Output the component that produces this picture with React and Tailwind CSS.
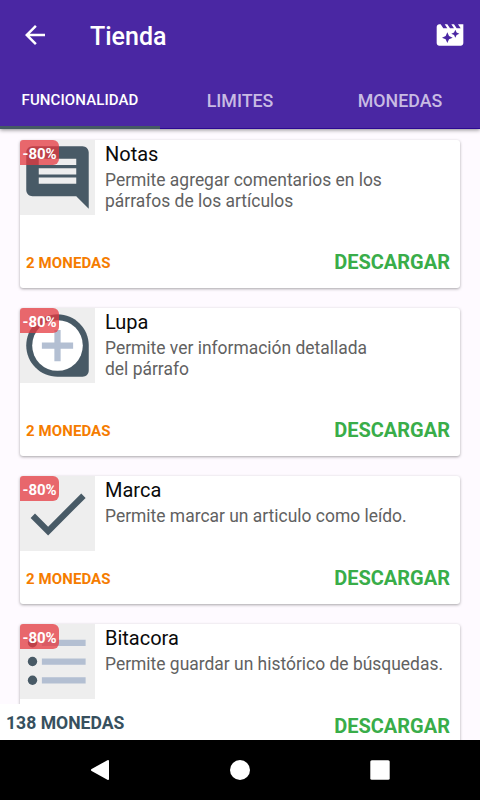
import { MdArrowBack, MdMovieFilter } from "react-icons/md";

const TABS = ["LIMITES", "MONEDAS"];

const NotasIcon = () => (
  <svg viewBox="0 0 24 24" className="h-[75px] w-[75px]">
    <path
      fill="#485a66"
      d="M21.99 4c0-1.1-.89-2-1.99-2H4c-1.1 0-2 .9-2 2v12c0 1.1.9 2 2 2h14l4 4-.01-18zM18 14H6v-2h12v2zm0-3H6V9h12v2zm0-3H6V6h12v2z"
    />
  </svg>
);

const LupaIcon = () => (
  <svg viewBox="0 0 24 24" className="h-[75px] w-[75px]">
    <path
      fill="#485a66"
      d="M12 2C6.49 2 2 6.49 2 12s4.49 10 10 10h8c1.1 0 2-.9 2-2v-8c0-5.51-4.49-10-10-10z"
    />
    <circle cx="12" cy="12" r="8.1" fill="#fff" />
    <path fill="#b3bfd2" d="M13 7h-2v4H7v2h4v4h2v-4h4v-2h-4z" />
  </svg>
);

const MarcaIcon = () => (
  <svg viewBox="0 0 24 24" className="h-[75px] w-[75px]">
    <path
      fill="#485a66"
      d="M9 16.2L4.8 12l-1.4 1.4L9 19 21 7l-1.4-1.4L9 16.2z"
    />
  </svg>
);

const BitacoraIcon = () => (
  <svg viewBox="0 0 24 24" className="h-[75px] w-[75px]">
    <g fill="#485a66">
      <circle cx="4" cy="6" r="1.5" />
      <circle cx="4" cy="12" r="1.5" />
      <circle cx="4" cy="18" r="1.5" />
    </g>
    <path fill="#b3bfd2" d="M7 5h14v2H7zM7 11h14v2H7zM7 17h14v2H7z" />
  </svg>
);

const ITEMS = [
  {
    title: "Notas",
    lines: ["Permite agregar comentarios en los", "párrafos de los artículos"],
    Icon: NotasIcon,
    price: "2 MONEDAS",
    height: "h-[148px]",
  },
  {
    title: "Lupa",
    lines: ["Permite ver información detallada", "del párrafo"],
    Icon: LupaIcon,
    price: "2 MONEDAS",
    height: "h-[148px]",
  },
  {
    title: "Marca",
    lines: ["Permite marcar un articulo como leído."],
    Icon: MarcaIcon,
    price: "2 MONEDAS",
    height: "h-[128px]",
  },
  {
    title: "Bitacora",
    lines: ["Permite guardar un histórico de búsquedas."],
    Icon: BitacoraIcon,
    height: "h-[128px]",
  },
];

const ProductCard = ({ title, lines, Icon, price, height }) => {
  return (
    <div
      className={`flex shrink-0 flex-col justify-between overflow-hidden rounded-[3px] bg-white shadow-[0_1px_3px_rgba(0,0,0,0.35)] ${height}`}
    >
      <div className="flex">
        <div className="relative h-[75px] w-[75px] shrink-0 bg-[#eeeeee]">
          <Icon />
          <span className="absolute left-0 top-0 flex h-[25px] w-[39px] items-center justify-center rounded-br-[6px] rounded-tr-[6px] bg-[#e53940]/75 pt-[3px] text-[15px] font-bold tracking-[-0.1px] text-white">
            -80%
          </span>
        </div>
        <div className="pl-[10px] pt-[2px]">
          <h2 className="text-[20px] leading-6 text-[#0a0a0a]">{title}</h2>
          <p className="mt-[4px] text-[17.45px] leading-[20.5px] text-[#616161]">
            {lines.map((line) => (
              <span key={line} className="block whitespace-nowrap">
                {line}
              </span>
            ))}
          </p>
        </div>
      </div>
      <div className="flex items-end justify-between pl-[6px] pr-[10px]">
        <span className="pb-[13px] text-[15px] font-bold leading-6 tracking-[0.1px] text-[#f57c00]">
          {price}
        </span>
        <button className="pb-[14px] text-[20px] font-bold leading-6 text-[#39ad49]">
          DESCARGAR
        </button>
      </div>
    </div>
  );
};

export default function App() {
  return (
    <div className="flex h-[800px] w-[480px] flex-col overflow-hidden bg-[#fefaff] font-['Roboto',sans-serif]">
      <header className="z-10 flex h-[129px] shrink-0 flex-col bg-[#4a27a3] text-white shadow-[0_1px_4px_rgba(0,0,0,0.45)]">
        <div className="flex h-[70px] items-center pl-[20px] pr-[14px]">
          <MdArrowBack className="h-[30px] w-[30px]" />
          <h1 className="ml-10 flex-1 pt-[4px] text-[25px] font-medium">
            Tienda
          </h1>
          <MdMovieFilter className="h-8 w-8" />
        </div>
        <nav className="grid flex-1 grid-cols-3">
          <div className="flex items-center justify-center border-b-[3px] border-[#455a64] pt-[5px] text-[15px] font-medium tracking-[0.1px]">
            FUNCIONALIDAD
          </div>
          {TABS.map((tab) => (
            <div
              key={tab}
              className="flex items-center justify-center border-b border-[#2c0a92] pt-[5px] text-[17.8px] font-medium text-[#c8bbe3]"
            >
              {tab}
            </div>
          ))}
        </nav>
      </header>

      <main className="relative flex min-h-0 flex-1 flex-col gap-5 overflow-hidden px-5 pt-[11px]">
        {ITEMS.map((item) => (
          <ProductCard key={item.title} {...item} />
        ))}
        <div className="absolute bottom-0 left-0 flex h-9 items-center bg-white px-[6px] pt-[2px] text-[17.6px] font-bold text-[#37505e]">
          138 MONEDAS
        </div>
      </main>

      <footer className="flex h-[60px] shrink-0 items-center justify-center gap-[110px] bg-black text-white">
        <svg viewBox="0 0 30 30" className="h-[30px] w-[30px]" fill="currentColor">
          <path d="M6.6 14.1L22.4 5.2q1.6-.7 1.6 1v17.6q0 1.7-1.6 1L6.6 15.9q-1.4-.9 0-1.8z" />
        </svg>
        <svg viewBox="0 0 30 30" className="h-[30px] w-[30px]" fill="currentColor">
          <circle cx="15" cy="15" r="10" />
        </svg>
        <svg viewBox="0 0 30 30" className="h-[30px] w-[30px]" fill="currentColor">
          <rect x="5.3" y="5.3" width="19.4" height="19.4" rx="1.5" />
        </svg>
      </footer>
    </div>
  );
}
